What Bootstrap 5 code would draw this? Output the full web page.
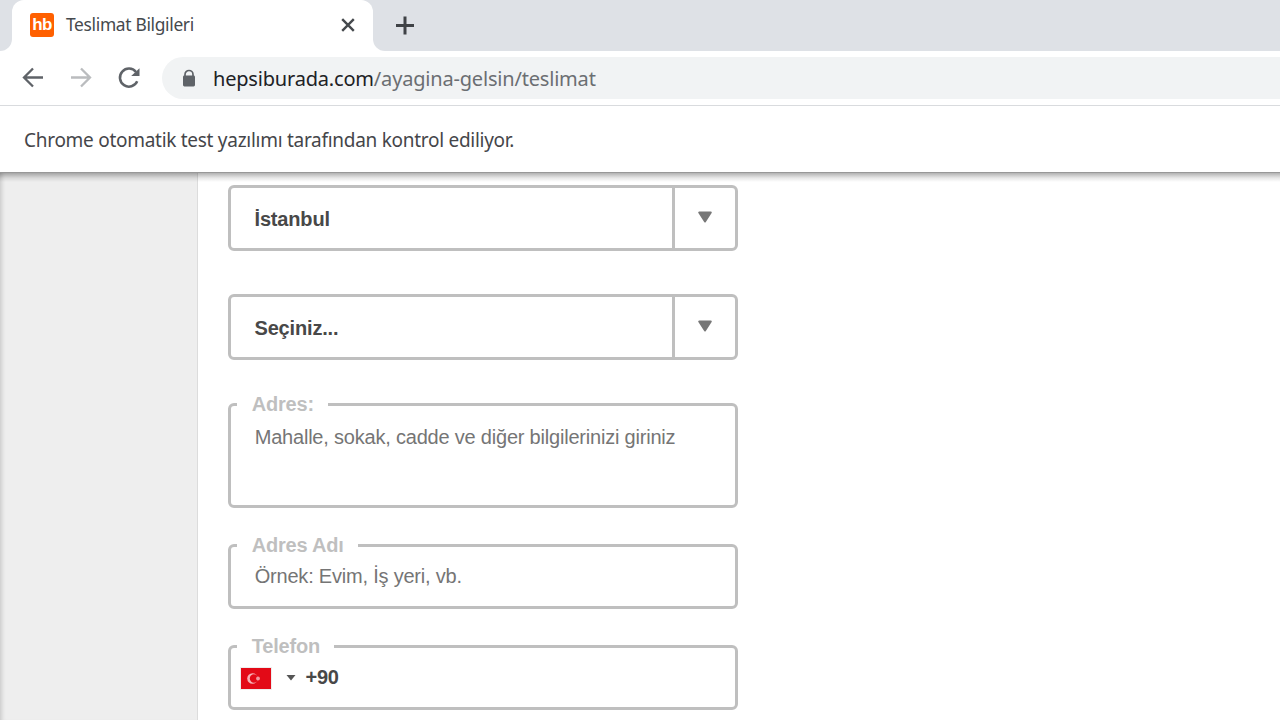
<!DOCTYPE html>
<html lang="tr">
<head>
<meta charset="utf-8">
<meta name="viewport" content="width=device-width, initial-scale=1">
<title>Teslimat Bilgileri</title>
<link href="https://cdn.jsdelivr.net/npm/bootstrap@5.3.0/dist/css/bootstrap.min.css" rel="stylesheet">
<style>
body{font-family:"Liberation Sans",Arial,sans-serif;font-size:20px;line-height:24px;color:#484848;background:#fff}
.window{height:720px}
.ui{font-family:"Noto Sans","Open Sans",sans-serif;white-space:nowrap}
.tabstrip{height:51px;background:#fff}
.strip-left{width:12px;background:#dee1e6;border-bottom-right-radius:12px}
.strip-right{background:#dee1e6;border-bottom-left-radius:12px;padding-left:21px;padding-bottom:2px}
.tab-wrap{width:361px;background:#dee1e6}
.browser-tab{background:#fff;border-radius:12px 12px 0 0;padding:0 17px 2px 18px}
.favicon{width:24px;height:24px;background:#ff6000;border-radius:3px;color:#fff;font:bold 17px/24px "Liberation Sans",sans-serif;letter-spacing:-.6px;text-align:center}
.tab-title{font-size:17.4px;letter-spacing:-.33px;margin-left:12px;padding-bottom:1px;color:#45494d}
.toolbar{height:55px;border-bottom:1px solid #d9dbde;padding:6px 0 6px 20px}
.address{height:42px;background:#f1f3f4;border-radius:21px 0 0 21px;margin-left:20px;padding-left:19px}
.url{font-size:20px;letter-spacing:-.19px;margin-left:16px;padding-top:1px;color:#202124}
.url-path{color:#6b6e72}
.infobar{height:66px;padding-left:24px;padding-top:2px;font-size:19px;letter-spacing:-.28px;color:#45464a}
.page{border-top:1px solid #989898}
.page::before{content:"";position:absolute;inset:0 0 auto 0;height:9px;background:linear-gradient(#0000004d,#00000018 55%,#0000)}
.side{width:198px;background:#eee;border-right:1px solid #dcdcdc;box-shadow:inset 5px 0 5px -4px #0003}
.delivery-form{width:540px;padding:12px 0 0 30px}
.field{border:3px solid #bfbfbf;border-radius:6px;height:65px;width:510px}
.select-box{height:66px;letter-spacing:-.17px}
.select-value{padding-left:23.500px;padding-top:1px}
.select-arrow{width:63px;border-left:3px solid #bfbfbf;padding:0 1px 2px 0}
.legend-label{top:-14px;left:6px;background:#fff;color:#bfbfbf;font-weight:700;letter-spacing:-.2px;padding-left:14.700px;line-height:24px;white-space:nowrap}
.hint{padding-left:23.700px;color:#757575;letter-spacing:-.205px;white-space:nowrap}
</style>
</head>
<body>
<div class="window d-flex flex-column overflow-hidden">
  <header class="flex-shrink-0">
    <div class="tabstrip d-flex">
      <div class="strip-left"></div>
      <div class="tab-wrap d-flex">
        <div class="browser-tab d-flex align-items-center flex-grow-1">
          <div class="favicon">hb</div>
          <span class="ui tab-title">Teslimat Bilgileri</span>
          <svg class="ms-auto" width="16" height="16" viewBox="0 0 16 16" stroke="#45494d" stroke-width="2.4" fill="none"><path d="M2.2 2.2 13.8 13.8M13.8 2.2 2.2 13.8"/></svg>
        </div>
      </div>
      <div class="strip-right flex-grow-1 d-flex align-items-center">
        <svg width="22" height="20" viewBox="0 0 22 20" stroke="#3f4246" stroke-width="3" fill="none"><path d="M2 10.500H20M11 1.500V19.500"/></svg>
      </div>
    </div>
    <nav class="toolbar d-flex align-items-center">
      <svg width="26" height="26" viewBox="0 0 26 26" fill="none" stroke="#5f6368" stroke-width="2.3"><path d="M23 12.500H4.500M13 3.500 4 12.500l9 9"/></svg>
      <svg width="26" height="26" viewBox="0 0 26 26" fill="none" stroke="#babcbe" stroke-width="2.3" style="margin-left:22px"><path d="M3 12.500H21.500M13 3.500l9 9-9 9"/></svg>
      <svg width="26" height="26" viewBox="0 0 26 26" fill="none" stroke="#5f6368" stroke-width="2.5" style="margin-left:22px"><path d="M21.200 16.200A9 9 0 1 1 20 7"/><path d="M23.500 3.200V11H15.200Z" fill="#5f6368" stroke="none"/></svg>
      <div class="address flex-grow-1 d-flex align-items-center">
        <svg width="16" height="20" viewBox="0 0 16 20"><path d="M4 9V6.500a4 4 0 0 1 8 0V9" fill="none" stroke="#5f6368" stroke-width="1.700"/><rect x="2" y="7.500" width="12" height="11" rx="1.400" fill="#5f6368"/></svg>
        <span class="ui url">hepsiburada.com<span class="url-path">/ayagina-gelsin/teslimat</span></span>
      </div>
    </nav>
    <div class="infobar d-flex align-items-center"><span class="ui">Chrome otomatik test yazılımı tarafından kontrol ediliyor.</span></div>
  </header>
  <main class="page position-relative d-flex flex-grow-1 overflow-hidden">
    <aside class="side flex-shrink-0"></aside>
    <form class="delivery-form flex-shrink-0">
      <div class="field select-box d-flex">
        <div class="select-value flex-grow-1 d-flex align-items-center fw-bold">İstanbul</div>
        <div class="select-arrow d-flex align-items-center justify-content-center"><svg width="16" height="14" viewBox="0 0 16 14"><path d="M2.200 2.500H13.800L8 11.500Z" fill="#777" stroke="#777" stroke-width="2" stroke-linejoin="round"/></svg></div>
      </div>
      <div class="field select-box d-flex" style="margin-top:43px">
        <div class="select-value flex-grow-1 d-flex align-items-center fw-bold">Seçiniz...</div>
        <div class="select-arrow d-flex align-items-center justify-content-center"><svg width="16" height="14" viewBox="0 0 16 14"><path d="M2.200 2.500H13.800L8 11.500Z" fill="#777" stroke="#777" stroke-width="2" stroke-linejoin="round"/></svg></div>
      </div>
      <div class="field position-relative" style="margin-top:43px;height:105px">
        <label class="legend-label position-absolute" style="width:91px">Adres:</label>
        <div class="hint" style="padding-top:19px">Mahalle, sokak, cadde ve diğer bilgilerinizi giriniz</div>
      </div>
      <div class="field position-relative" style="margin-top:36px">
        <label class="legend-label position-absolute" style="width:121px">Adres Adı</label>
        <div class="hint" style="padding-top:17px">Örnek: Evim, İş yeri, vb.</div>
      </div>
      <div class="field position-relative d-flex align-items-center" style="margin-top:36px">
        <label class="legend-label position-absolute" style="width:97px">Telefon</label>
        <svg width="32" height="23" viewBox="0 0 32 23" style="margin:2px 0 0 9px"><path fill="#eee" d="M0 0H32V23H0z"/><path fill="#e30a17" d="M1 1H31V22H1z"/><circle cx="12.500" cy="11.500" r="5.300" fill="#f6b3b8"/><circle cx="14" cy="11.500" r="4.200" fill="#e30a17"/><circle cx="18" cy="11.500" r="1.900" fill="#f29aa1"/></svg>
        <svg width="10" height="6" viewBox="0 0 10 6" style="margin-left:13.500px"><path d="M.5 0H9.500L5 5.500Z" fill="#555"/></svg>
        <span class="fw-bold" style="margin-left:10px;padding-bottom:2px;letter-spacing:-.3px">+90</span>
      </div>
    </form>
  </main>
</div>
<script src="https://cdn.jsdelivr.net/npm/bootstrap@5.3.0/dist/js/bootstrap.bundle.min.js"></script>
</body>
</html>
